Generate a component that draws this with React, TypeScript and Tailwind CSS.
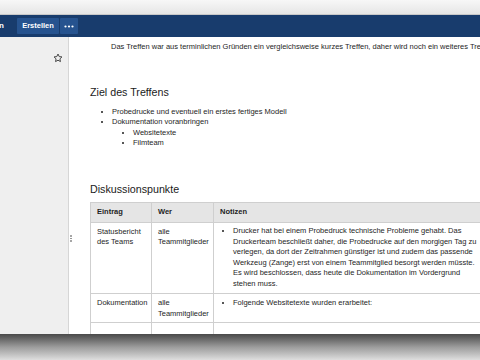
import React from "react";

const font = { fontFamily: '"Liberation Sans", Arial, sans-serif' };

function Star() {
  return (
    <svg width="10" height="10" viewBox="0 0 24 24" fill="none" stroke="#3a3a3a" strokeWidth="2.2" strokeLinejoin="round">
      <path d="M12 2.5l2.9 6.1 6.6.8-4.9 4.6 1.3 6.6L12 17.3l-5.9 3.3 1.3-6.6-4.9-4.6 6.6-.8z" />
    </svg>
  );
}

export default function App() {
  return (
    <div
      className="w-[480px] h-[360px] overflow-hidden flex flex-col bg-white text-[#1e1e1e]"
      style={font}
    >
      {/* top strip */}
      <div className="h-[15px] shrink-0 bg-gradient-to-b from-[#f7f7f7] to-[#e6e6e6] border-b border-[#c9c9c9]" />

      {/* nav bar */}
      <div className="h-[22px] shrink-0 bg-[#183c6d] flex items-center text-white">
        <span className="text-[8px] font-bold leading-none ml-[-1px] w-[18px]">n</span>
        <div className="h-[16px] w-[42px] bg-[#26538f] flex items-center justify-center text-[7.5px] font-bold rounded-[1px]">
          Erstellen
        </div>
        <div className="h-[16px] w-[18px] ml-[1px] bg-[#26538f] flex items-center justify-center rounded-[1px]">
          <svg width="10" height="3" viewBox="0 0 10 3" fill="#ffffff">
            <circle cx="1.5" cy="1.5" r="1.1" />
            <circle cx="5" cy="1.5" r="1.1" />
            <circle cx="8.5" cy="1.5" r="1.1" />
          </svg>
        </div>
      </div>

      {/* body */}
      <div className="flex-1 flex min-h-0">
        <div className="w-[69px] shrink-0 bg-[#efefef] border-r border-[#d6d6d6] flex justify-end pt-[16px] pr-[5px]">
          <div className="h-[10px]">
            <Star />
          </div>
        </div>

        <div className="flex-1 relative overflow-hidden pl-[21px] pt-[5px]">
          <div className="absolute left-[1px] top-[198px] flex flex-col gap-[1px]">
            <span className="w-[1.5px] h-[1.5px] bg-[#888] rounded-full" />
            <span className="w-[1.5px] h-[1.5px] bg-[#888] rounded-full" />
            <span className="w-[1.5px] h-[1.5px] bg-[#888] rounded-full" />
          </div>

          <p className="text-[7.5px] leading-[10px] whitespace-nowrap pl-[21px]">
            Das Treffen war aus terminlichen Gründen ein vergleichsweise kurzes Treffen, daher wird noch ein weiteres Treffen
          </p>

          <h2 className="text-[10.7px] leading-[13px] text-[#1a1a1a] mt-[33.5px]">Ziel des Treffens</h2>

          <ul className="text-[7.5px] leading-[10.5px] mt-[8px] pl-[22px] list-disc whitespace-nowrap">
            <li>Probedrucke und eventuell ein erstes fertiges Modell</li>
            <li>
              Dokumentation voranbringen
              <ul className="list-disc pl-[21px]">
                <li>Websitetexte</li>
                <li>Filmteam</li>
              </ul>
            </li>
          </ul>

          <h2 className="text-[10.7px] leading-[13px] text-[#1a1a1a] mt-[34px]">Diskussionspunkte</h2>

          <table className="mt-[6.5px] border-collapse text-[7.5px] leading-[10.6px] table-fixed w-[420px]">
            <colgroup>
              <col className="w-[61px]" />
              <col className="w-[62px]" />
              <col className="w-[297px]" />
            </colgroup>
            <thead>
              <tr className="h-[20px] bg-[#e5e5e5]">
                <th className="border border-[#cfcfcf] text-left font-bold px-[6px] align-middle">Eintrag</th>
                <th className="border border-[#cfcfcf] text-left font-bold px-[6px] align-middle">Wer</th>
                <th className="border border-[#cfcfcf] text-left font-bold px-[6px] align-middle">Notizen</th>
              </tr>
            </thead>
            <tbody>
              <tr className="h-[71px]">
                <td className="border border-[#cfcfcf] align-top px-[6px] pt-[3.5px]">
                  Statusbericht
                  <br />
                  des Teams
                </td>
                <td className="border border-[#cfcfcf] align-top px-[6px] pt-[3.5px]">
                  alle
                  <br />
                  Teammitglieder
                </td>
                <td className="border border-[#cfcfcf] align-top px-[6px] pt-[3px] whitespace-nowrap">
                  <ul className="list-disc pl-[13px]">
                    <li>
                      Drucker hat bei einem Probedruck technische Probleme gehabt. Das
                      <br />
                      Druckerteam beschließt daher, die Probedrucke auf den morgigen Tag zu
                      <br />
                      verlegen, da dort der Zeitrahmen günstiger ist und zudem das passende
                      <br />
                      Werkzeug (Zange) erst von einem Teammitglied besorgt werden müsste.
                      <br />
                      Es wird beschlossen, dass heute die Dokumentation im Vordergrund
                      <br />
                      stehen muss.
                    </li>
                  </ul>
                </td>
              </tr>
              <tr className="h-[29px]">
                <td className="border border-[#cfcfcf] align-top px-[6px] pt-[4px]">Dokumentation</td>
                <td className="border border-[#cfcfcf] align-top px-[6px] pt-[4px]">
                  alle
                  <br />
                  Teammitglieder
                </td>
                <td className="border border-[#cfcfcf] align-top px-[6px] pt-[4px] whitespace-nowrap">
                  <ul className="list-disc pl-[13px]">
                    <li>Folgende Websitetexte wurden erarbeitet:</li>
                  </ul>
                </td>
              </tr>
              <tr className="h-[40px]">
                <td className="border border-[#cfcfcf]" />
                <td className="border border-[#cfcfcf]" />
                <td className="border border-[#cfcfcf]" />
              </tr>
            </tbody>
          </table>
        </div>
      </div>

      {/* bottom bezel shadow */}
      <div className="h-[26px] shrink-0 bg-gradient-to-b from-[#4a4a4a] via-[#9c9c9c] to-[#dedede]" />
    </div>
  );
}
